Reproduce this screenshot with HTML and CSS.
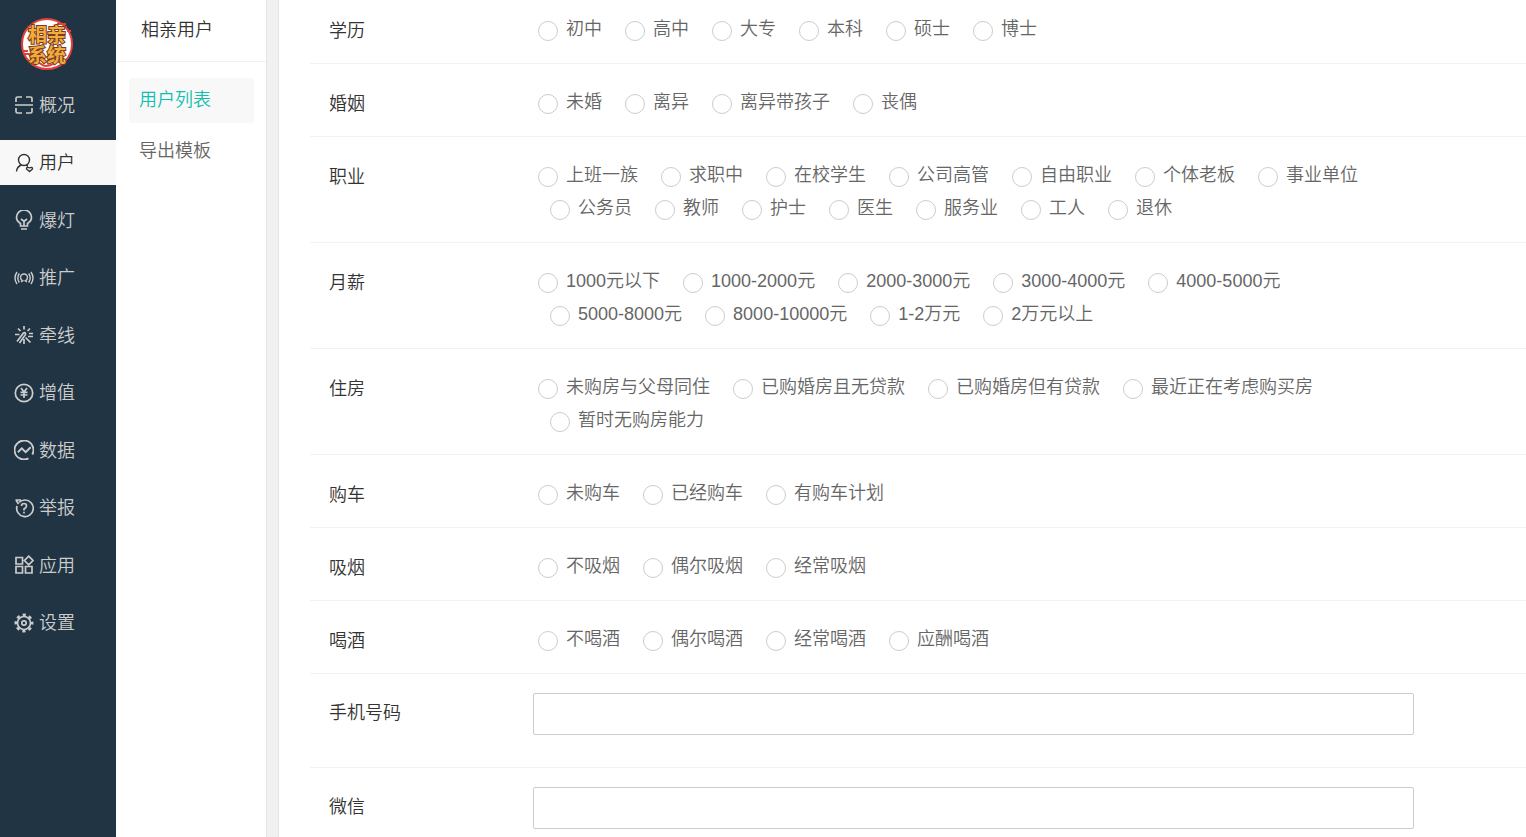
FILE: index.html
```html
<!DOCTYPE html>
<html lang="zh-CN">
<head>
<meta charset="utf-8">
<meta name="viewport" content="width=device-width, initial-scale=1">
<title>相亲用户</title>
<link rel="stylesheet" href="styles.css">
</head>
<body>
<div class="app">
  <aside class="sidebar">
    <svg class="logo" viewBox="0 0 54 54" role="img" aria-label="相亲系统">
      <circle cx="27" cy="27" r="25" fill="#fff" stroke="#e2403b" stroke-width="2"/>
      <path d="M37 7h9M42 10h5M47 14h4M2 34h6M3 37h9M10 46q7-3 11 1t12 0q6-4 9-1M40 44h5" fill="none" stroke="#e2403b" stroke-width="2"/>
      <g class="logo-text">
        <text x="27" y="25" text-anchor="middle">相亲</text>
        <text x="27" y="45" text-anchor="middle">系统</text>
      </g>
    </svg>
    <nav class="nav">
      <a class="nav-item" href="#"><svg class="icon" viewBox="0 0 20 20"><path d="M2 7V3.500q0-1.500 1.500-1.500H8M12 2h4.500q1.500 0 1.500 1.500V7M2 13v3.500q0 1.500 1.500 1.500H8M12 18h4.500q1.500 0 1.500-1.500V13M1 10h18"/></svg>概况</a>
      <a class="nav-item active" href="#"><svg class="icon thin" viewBox="0 0 20 20"><circle cx="10" cy="7" r="5.500"/><path d="M7.500 12Q3 13.500 2.500 18.500M12 12.300l2 .7M15.500 18.500l-3-2.500q0-2.500 3-1.200 3-1.300 3 1.200z"/></svg>用户</a>
      <a class="nav-item" href="#"><svg class="icon" viewBox="0 0 20 20"><path d="M6.500 16v-2.500Q2.500 11 2.500 7.500a7.500 7.500 0 0 1 15 0q0 3.500-4 6V16zM7 9l3 2.500L13 9M10 11.500V16M7 19h6"/></svg>爆灯</a>
      <a class="nav-item" href="#"><svg class="icon thin" viewBox="0 0 20 20"><path d="M3 4q-4 6 0 12M17 4q4 6 0 12M5.300 5.500q-3 4.500 0 9M14.700 5.500q3 4.500 0 9M7 13.800l1.700-1Q6.500 11.500 6.500 9.500a3.500 3.500 0 0 1 7 0q0 2-2.200 3.300l1.700 1"/></svg>推广</a>
      <a class="nav-item" href="#"><svg class="icon" viewBox="0 0 20 20"><path d="M10 1v3.500M4 3.500l2.500 2.500M16 3.500L13.500 6M1 9.500h4.500M15 8.500h4M14 11.500h5M3 16.500L9.500 8q1.500-1 2 .5t-1.500 3L5.500 18M11.500 12.500l5 5M10 14v5"/></svg>牵线</a>
      <a class="nav-item" href="#"><svg class="icon" viewBox="0 0 20 20"><circle cx="10" cy="10" r="8.700"/><path d="M7 5l3 4 3-4M6.500 9.300h7M6.500 12h7M10 9v6"/></svg>增值</a>
      <a class="nav-item" href="#"><svg class="icon" viewBox="1 1 18 18"><path d="M14 17.500A8.500 8.500 0 1 1 17.500 14M4.500 12l3.500-3.500 3.500 3.500L16 7.500"/></svg>数据</a>
      <a class="nav-item" href="#"><svg class="icon" viewBox="0 0 20 20"><path d="M5 4.300Q7.500 2 11 2a8.300 8.300 0 1 1-8 6M1.500 2h5.500M2 2l2.500 4M7.500 8q0-2.500 2.500-2.500t2.500 2.500q0 1.500-2.500 3v1.500M10 13.800v1.700"/></svg>举报</a>
      <a class="nav-item" href="#"><svg class="icon" viewBox="0 0 20 20"><path d="M2 2.500h6.500V9H2zM2 11.500h6.500V18H2zM11.500 11.500H18V18h-6.500zM14.700 1.200L19 5.500l-4.300 4.300-4.300-4.300z"/></svg>应用</a>
      <a class="nav-item" href="#"><svg class="icon" viewBox="0 0 20 20"><circle cx="10" cy="10" r="2.200"/><circle cx="10" cy="10" r="6.500"/><circle cx="10" cy="10" r="8.200" stroke-width="2.500" stroke-dasharray="3.200 3.240" stroke-dashoffset="1.600"/></svg>设置</a>
    </nav>
  </aside>

  <aside class="submenu">
    <h1 class="submenu-title">相亲用户</h1>
    <nav class="submenu-list">
      <a class="submenu-item current" href="#">用户列表</a>
      <a class="submenu-item" href="#">导出模板</a>
    </nav>
  </aside>

  <main class="content">
    <form class="form">
      <div class="row" role="radiogroup" aria-labelledby="edu">
        <span class="name" id="edu">学历</span>
        <div class="options">
          <label class="option"><input type="radio" name="edu">初中</label>
          <label class="option"><input type="radio" name="edu">高中</label>
          <label class="option"><input type="radio" name="edu">大专</label>
          <label class="option"><input type="radio" name="edu">本科</label>
          <label class="option"><input type="radio" name="edu">硕士</label>
          <label class="option"><input type="radio" name="edu">博士</label>
        </div>
      </div>
      <div class="row" role="radiogroup" aria-labelledby="marriage">
        <span class="name" id="marriage">婚姻</span>
        <div class="options">
          <label class="option"><input type="radio" name="marriage">未婚</label>
          <label class="option"><input type="radio" name="marriage">离异</label>
          <label class="option"><input type="radio" name="marriage">离异带孩子</label>
          <label class="option"><input type="radio" name="marriage">丧偶</label>
        </div>
      </div>
      <div class="row" role="radiogroup" aria-labelledby="job">
        <span class="name" id="job">职业</span>
        <div class="options">
          <label class="option"><input type="radio" name="job">上班一族</label>
          <label class="option"><input type="radio" name="job">求职中</label>
          <label class="option"><input type="radio" name="job">在校学生</label>
          <label class="option"><input type="radio" name="job">公司高管</label>
          <label class="option"><input type="radio" name="job">自由职业</label>
          <label class="option"><input type="radio" name="job">个体老板</label>
          <label class="option"><input type="radio" name="job">事业单位</label>
          <label class="option"><input type="radio" name="job">公务员</label>
          <label class="option"><input type="radio" name="job">教师</label>
          <label class="option"><input type="radio" name="job">护士</label>
          <label class="option"><input type="radio" name="job">医生</label>
          <label class="option"><input type="radio" name="job">服务业</label>
          <label class="option"><input type="radio" name="job">工人</label>
          <label class="option"><input type="radio" name="job">退休</label>
        </div>
      </div>
      <div class="row" role="radiogroup" aria-labelledby="salary">
        <span class="name" id="salary">月薪</span>
        <div class="options">
          <label class="option"><input type="radio" name="salary">1000元以下</label>
          <label class="option"><input type="radio" name="salary">1000-2000元</label>
          <label class="option"><input type="radio" name="salary">2000-3000元</label>
          <label class="option"><input type="radio" name="salary">3000-4000元</label>
          <label class="option"><input type="radio" name="salary">4000-5000元</label>
          <label class="option"><input type="radio" name="salary">5000-8000元</label>
          <label class="option"><input type="radio" name="salary">8000-10000元</label>
          <label class="option"><input type="radio" name="salary">1-2万元</label>
          <label class="option"><input type="radio" name="salary">2万元以上</label>
        </div>
      </div>
      <div class="row" role="radiogroup" aria-labelledby="house">
        <span class="name" id="house">住房</span>
        <div class="options">
          <label class="option"><input type="radio" name="house">未购房与父母同住</label>
          <label class="option"><input type="radio" name="house">已购婚房且无贷款</label>
          <label class="option"><input type="radio" name="house">已购婚房但有贷款</label>
          <label class="option"><input type="radio" name="house">最近正在考虑购买房</label>
          <label class="option"><input type="radio" name="house">暂时无购房能力</label>
        </div>
      </div>
      <div class="row" role="radiogroup" aria-labelledby="car">
        <span class="name" id="car">购车</span>
        <div class="options">
          <label class="option"><input type="radio" name="car">未购车</label>
          <label class="option"><input type="radio" name="car">已经购车</label>
          <label class="option"><input type="radio" name="car">有购车计划</label>
        </div>
      </div>
      <div class="row" role="radiogroup" aria-labelledby="smoke">
        <span class="name" id="smoke">吸烟</span>
        <div class="options">
          <label class="option"><input type="radio" name="smoke">不吸烟</label>
          <label class="option"><input type="radio" name="smoke">偶尔吸烟</label>
          <label class="option"><input type="radio" name="smoke">经常吸烟</label>
        </div>
      </div>
      <div class="row" role="radiogroup" aria-labelledby="drink">
        <span class="name" id="drink">喝酒</span>
        <div class="options">
          <label class="option"><input type="radio" name="drink">不喝酒</label>
          <label class="option"><input type="radio" name="drink">偶尔喝酒</label>
          <label class="option"><input type="radio" name="drink">经常喝酒</label>
          <label class="option"><input type="radio" name="drink">应酬喝酒</label>
        </div>
      </div>
      <div class="row row-text">
        <label class="name" for="phone">手机号码</label>
        <input class="text" type="text" id="phone">
      </div>
      <div class="row row-text">
        <label class="name" for="wechat">微信</label>
        <input class="text" type="text" id="wechat">
      </div>
    </form>
  </main>
</div>
</body>
</html>
```
FILE: styles.css
```css
* {
  box-sizing: border-box;
}

body {
  margin: 0;
  font-family: "Liberation Sans", "Noto Sans CJK SC", sans-serif;
  font-size: 18px;
  font-weight: 350;
  color: #333;
  background: #fff;
}

a {
  color: inherit;
  text-decoration: none;
}

.app {
  display: flex;
  height: 100vh;
  overflow: hidden;
  background: #f1f1f1;
}

/* Primary navigation */
.sidebar {
  flex: 0 0 116px;
  padding-top: 17px;
  background: #203443;
  color: #ccc;
}

.logo {
  display: block;
  width: 54px;
  height: 54px;
  margin: 0 0 5px 20px;
}

.logo-text {
  font-family: "Liberation Sans", "Noto Sans CJK SC", sans-serif;
  font-size: 19px;
  font-weight: 700;
  fill: #f0ad3c;
  stroke: #7c3a22;
  stroke-width: 2px;
  paint-order: stroke;
}

.nav {
  display: grid;
  grid-template-rows: repeat(10, 1fr);
  align-items: center;
  height: 575px;
}

.nav-item {
  display: flex;
  align-items: center;
  gap: 5px;
  height: 45px;
  padding: 0 0 2px 14px;
}

.nav-item.active {
  background: #f8f8f8;
  color: #333;
}

.icon {
  width: 20px;
  height: 20px;
  margin-top: 3px;
  fill: none;
  stroke: currentColor;
  stroke-width: 1.7;
}

.icon.thin {
  stroke-width: 1.4;
}

/* Secondary menu */
.submenu {
  flex: 0 0 151px;
  border-right: 1px solid #e5e5e5;
  background: #fff;
}

.submenu-title {
  margin: 0;
  padding-left: 25px;
  border-bottom: 1px solid #f0f0f0;
  font-size: 18px;
  font-weight: 350;
  line-height: 61px;
}

.submenu-list {
  display: grid;
  gap: 6px;
  padding: 16px 12px 0 13px;
}

.submenu-item {
  padding-left: 10px;
  border-radius: 3px;
  line-height: 45px;
  color: #666;
}

.submenu-item.current {
  background: #f8f8f8;
  color: #10bfaf;
}

/* Form */
.content {
  flex: 1;
  min-width: 0;
  margin-left: 11px;
  padding-left: 31px;
  border-left: 1px solid #e5e5e5;
  background: #fff;
  overflow: hidden;
}

.row {
  display: grid;
  grid-template-columns: 204px 1fr;
  align-items: start;
  padding: 22px 112px 17px 19px;
  border-bottom: 1px solid #f0f4f4;
}

.row:first-child {
  padding-top: 13px;
}

.name {
  padding-top: 3px;
  line-height: 30px;
}

.options {
  display: flex;
  flex-wrap: wrap;
  column-gap: 23px;
  padding-left: 17px;
  color: #666;
}

.option {
  display: flex;
  align-items: center;
  gap: 8px;
  line-height: 33px;
}

.option:first-child {
  margin-left: -12px;
}

.option input {
  appearance: none;
  width: 20px;
  height: 20px;
  margin: 2px 0 0;
  border: 1px solid #ccc;
  border-radius: 50%;
  background: #fff;
}

.option input:checked {
  border: 6px solid #10bfaf;
}

.row-text {
  padding-top: 19px;
  padding-bottom: 32px;
}

.row-text .name {
  line-height: 34px;
}

.text {
  width: 100%;
  height: 42px;
  padding: 0 10px;
  border: 1px solid #ccc;
  border-radius: 2px;
  background: #fff;
  font: inherit;
  color: inherit;
}
```
